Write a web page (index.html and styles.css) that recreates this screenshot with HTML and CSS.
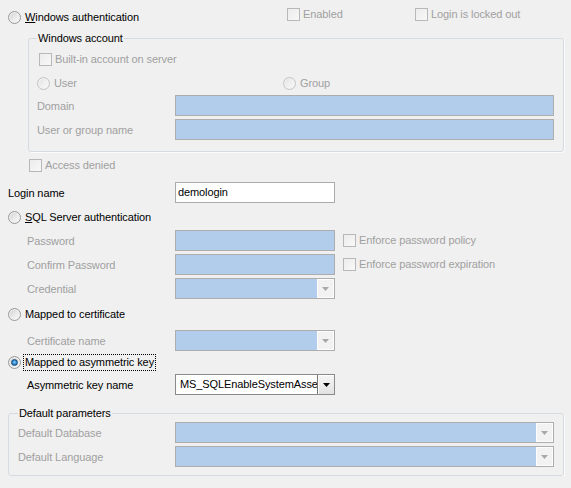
FILE: index.html
```html
<!DOCTYPE html>
<html>
<head>
<meta charset="utf-8">
<title>Login</title>
<link rel="stylesheet" href="styles.css">
</head>
<body>
<div class="page">
  <div class="row top">
    <div class="opt w279"><span class="radio"></span><span class="txt"><span class="u">W</span>indows authentication</span></div>
    <div class="chk up w128"><span class="box"></span><span class="ctxt dis">Enabled</span></div>
    <div class="chk up"><span class="box"></span><span class="ctxt dis">Login is locked out</span></div>
  </div>

  <fieldset class="grp win">
    <legend>Windows account</legend>
    <div class="row"><div class="chk in"><span class="box"></span><span class="ctxt dis">Built-in account on server</span></div></div>
    <div class="row mt8">
      <div class="opt w246"><span class="radio dis"></span><span class="txt dis">User</span></div>
      <div class="opt"><span class="radio dis"></span><span class="txt dis">Group</span></div>
    </div>
    <div class="field mt4"><span class="lbl dis w138">Domain</span><span class="edit dis grow"></span></div>
    <div class="field mt3"><span class="lbl dis w138">User or group name</span><span class="edit dis grow"></span></div>
  </fieldset>

  <div class="row mt5"><div class="chk acc"><span class="box"></span><span class="ctxt dis">Access denied</span></div></div>

  <div class="field mt9"><span class="lbl w167">Login name</span><span class="edit w160"><span class="val">demologin</span></span></div>

  <div class="row mt6"><div class="opt"><span class="radio"></span><span class="txt"><span class="u">S</span>QL Server authentication</span></div></div>

  <div class="sub">
    <div class="field mt5"><span class="lbl dis w148">Password</span><span class="edit dis w160"></span>
      <div class="chk side"><span class="box"></span><span class="ctxt dis">Enforce password policy</span></div></div>
    <div class="field mt3"><span class="lbl dis w148">Confirm Password</span><span class="edit dis w160"></span>
      <div class="chk side"><span class="box"></span><span class="ctxt dis">Enforce password expiration</span></div></div>
    <div class="field mt3"><span class="lbl dis w148">Credential</span><span class="edit combo dis w160"><span class="val"></span><span class="btn"><svg width="7" height="4" viewBox="0 0 7 4"><path d="M0 0h7L3.5 4z" fill="#a8a8a8"/></svg></span></span></div>
  </div>

  <div class="row mt7"><div class="opt"><span class="radio"></span><span class="txt">Mapped to certificate</span></div></div>

  <div class="sub">
    <div class="field mt8"><span class="lbl dis w148">Certificate name</span><span class="edit combo dis w160"><span class="val"></span><span class="btn"><svg width="7" height="4" viewBox="0 0 7 4"><path d="M0 0h7L3.5 4z" fill="#a8a8a8"/></svg></span></span></div>
  </div>

  <div class="row r17 mt3"><div class="opt"><span class="radio sel"></span><span class="txt focus">Mapped to asymmetric key</span></div></div>

  <div class="sub">
    <div class="field mt3"><span class="lbl w148">Asymmetric key name</span><span class="edit combo on w160"><span class="val">MS_SQLEnableSystemAssemblyLoadingKey</span><span class="btn on"><svg width="7" height="4" viewBox="0 0 7 4"><path d="M0 0h7L3.5 4z" fill="#000"/></svg></span></span></div>
  </div>

  <fieldset class="grp defs">
    <legend>Default parameters</legend>
    <div class="field"><span class="lbl dis w157">Default Database</span><span class="edit combo dis grow"><span class="val"></span><span class="btn"><svg width="7" height="4" viewBox="0 0 7 4"><path d="M0 0h7L3.5 4z" fill="#a8a8a8"/></svg></span></span></div>
    <div class="field mt3"><span class="lbl dis w157">Default Language</span><span class="edit combo dis grow"><span class="val"></span><span class="btn"><svg width="7" height="4" viewBox="0 0 7 4"><path d="M0 0h7L3.5 4z" fill="#a8a8a8"/></svg></span></span></div>
  </fieldset>
</div>
</body>
</html>
```
FILE: styles.css
```css
html, body {
  margin: 0;
  background: #f0f0f0;
}
body {
  font-family: "Liberation Sans", Arial, sans-serif;
  font-size: 11px;
  line-height: 15px;
  letter-spacing: -0.1px;
  color: #000;
}
.page {
  padding: 9px 7px 0 8px;
}
.row {
  display: flex;
  align-items: center;
  height: 16px;
}
.row.r17 { height: 17px; }
.field {
  display: flex;
  align-items: center;
  height: 21px;
}
.mt3 { margin-top: 3px; }
.mt4 { margin-top: 4px; }
.mt5 { margin-top: 5px; }
.mt6 { margin-top: 6px; }
.mt7 { margin-top: 7px; }
.mt8 { margin-top: 8px; }
.mt9 { margin-top: 9px; }

.dis { color: #a0a0a0; }
.u { text-decoration: underline; }

.w279 { width: 279px; flex: none; }
.w128 { width: 128px; flex: none; }
.w246 { width: 246px; flex: none; }
.w138 { width: 138px; }
.w148 { width: 148px; }
.w157 { width: 157px; }
.w167 { width: 167px; }
.w160 { width: 160px; }
.lbl { flex: none; white-space: nowrap; padding-top: 1px; }

/* radio */
.opt {
  display: flex;
  align-items: center;
  white-space: nowrap;
}
.radio {
  flex: none;
  width: 13px;
  height: 13px;
  box-sizing: border-box;
  border-radius: 50%;
  border: 1px solid #999;
  background: linear-gradient(135deg, #cfcfcf 0%, #e9e9e9 50%, #fbfbfb 100%);
  box-shadow: inset 0 0 0 1px #f2f2f2;
  display: flex;
  align-items: center;
  justify-content: center;
}
.radio.dis {
  border-color: #c4c4c4;
  background: linear-gradient(135deg, #e2e2e2 0%, #efefef 50%, #f9f9f9 100%);
}
.radio.sel::after {
  content: "";
  width: 7px;
  height: 7px;
  box-sizing: border-box;
  border-radius: 50%;
  border: 1px solid #1b4d78;
  background: radial-gradient(circle at 50% 45%, #8fd0f8 0%, #2f8ad0 50%, #145a96 100%);
}
.txt {
  margin-left: 2px;
  padding: 0 1px;
  border: 1px dotted transparent;
  line-height: 15px;
}
.txt.focus { border-color: #000; }

/* checkbox */
.chk {
  display: flex;
  align-items: center;
  white-space: nowrap;
}
.chk.up {
  align-self: flex-start;
  margin-top: -2px;
  height: 15px;
}
.chk.in { margin-left: 2px; }
.chk.acc { margin-left: 21px; }
.chk.side { margin-left: 8px; }
.box {
  flex: none;
  width: 13px;
  height: 13px;
  box-sizing: border-box;
  border: 1px solid #b8b8b8;
  background: linear-gradient(135deg, #ececec, #f8f8f8);
}
.ctxt { margin-left: 3px; }

/* groups */
.grp {
  margin: 0;
  border: 1px solid #d5dbe0;
  border-radius: 3px;
  box-shadow: 1px 1px 0 #fbfbfb;
}
.grp legend {
  padding: 0 1px;
  line-height: 13px;
}
.grp.win {
  margin: 7px 0 0 20px;
  padding: 6px 9px 11px 8px;
}
.grp.defs {
  margin-top: 12px;
  padding: 2px 9px 8px 9px;
}

/* edits */
.sub { margin-left: 19px; }
.edit {
  flex: none;
  display: flex;
  align-items: stretch;
  height: 21px;
  box-sizing: border-box;
  border: 1px solid #ababab;
  background: #fff;
  overflow: hidden;
}
.edit.dis { background: #b1cdeb; border-color: #adadad; }
.edit.grow { flex: 1; }
.edit.on { border-color: #8a8a8a; }
.val {
  flex: 1;
  min-width: 0;
  padding-left: 2px;
  line-height: 19px;
  white-space: nowrap;
  overflow: hidden;
}
.combo .val { padding-left: 4px; }
.btn {
  flex: none;
  width: 17px;
  background: #f2f2f2;
  box-shadow: inset 0 0 0 1px #fdfdfd;
  display: flex;
  align-items: center;
  justify-content: center;
}
.btn.on {
  box-sizing: border-box;
  border-left: 1px solid #777;
  background: linear-gradient(#f6f6f6, #e2e2e2);
  box-shadow: inset 1px 1px 0 #fff;
}
```
